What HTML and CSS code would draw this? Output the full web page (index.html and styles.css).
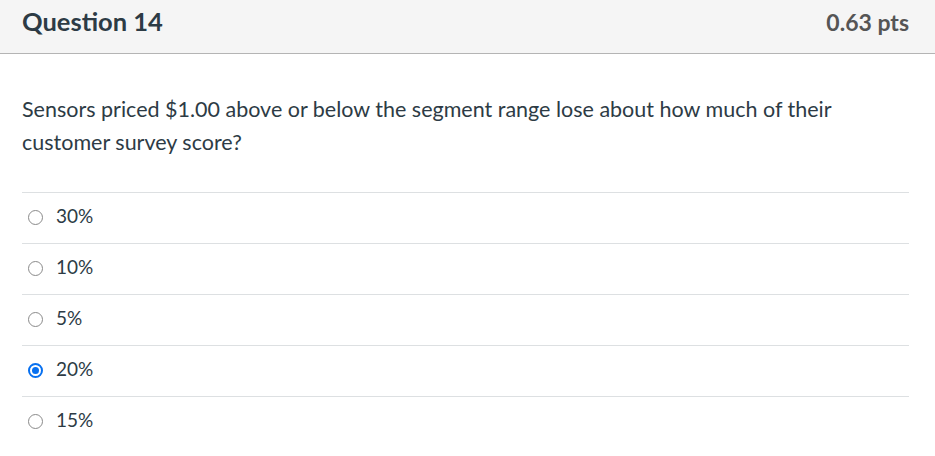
FILE: index.html
```html
<!DOCTYPE html>
<html>
<head>
<meta charset="utf-8">
<link rel="stylesheet" href="styles.css">
</head>
<body>
<div class="question">
  <div class="header">
    <h2 class="title">Question 14</h2>
    <span class="points">0.63 pts</span>
  </div>
  <div class="content">
    <p class="text">Sensors priced $1.00 above or below the segment range lose about how much of their customer survey score?</p>
    <div class="answers">
      <label class="answer"><span class="radio"></span><span class="label">30%</span></label>
      <label class="answer"><span class="radio"></span><span class="label">10%</span></label>
      <label class="answer"><span class="radio"></span><span class="label">5%</span></label>
      <label class="answer"><span class="radio checked"></span><span class="label">20%</span></label>
      <label class="answer"><span class="radio"></span><span class="label">15%</span></label>
    </div>
  </div>
</div>
</body>
</html>
```
FILE: styles.css
```css
html, body {
  margin: 0;
  padding: 0;
  background: #fff;
}
body {
  font-family: Lato, "Open Sans", sans-serif;
  color: #2d3b45;
}
.header {
  height: 54px;
  background: #f5f5f5;
  border-bottom: 1px solid #b4b4b4;
  display: flex;
  align-items: center;
  justify-content: space-between;
  padding: 0 26px 0 22px;
  box-sizing: border-box;
}
.title {
  margin: 0;
  font-size: 25.5px;
  font-weight: 700;
  color: #2d3b45;
  position: relative;
  top: -6px;
}
.points {
  font-size: 23px;
  font-weight: 700;
  color: #555;
  position: relative;
  top: -5px;
}
.content {
  padding: 0 26px 0 22px;
}
.text {
  margin: 39px 0 0;
  font-size: 21.5px;
  line-height: 33px;
}
.answers {
  margin-top: 33px;
}
.answer {
  display: flex;
  align-items: center;
  height: 51px;
  border-top: 1px solid #dde0e2;
  box-sizing: border-box;
  padding-left: 6px;
  padding-bottom: 6px;
  font-size: 19px;
}
.radio {
  width: 15px;
  height: 15px;
  border: 1.5px solid #8a8a8a;
  border-radius: 50%;
  box-sizing: border-box;
  margin-right: 13px;
  position: relative;
  top: 2px;
}
.radio.checked {
  border: 2px solid #0770f0;
}
.radio.checked::after {
  content: "";
  position: absolute;
  left: 2px;
  top: 2px;
  width: 7px;
  height: 7px;
  border-radius: 50%;
  background: #0770f0;
}
.label {
  color: #2d3b45;
}
```
